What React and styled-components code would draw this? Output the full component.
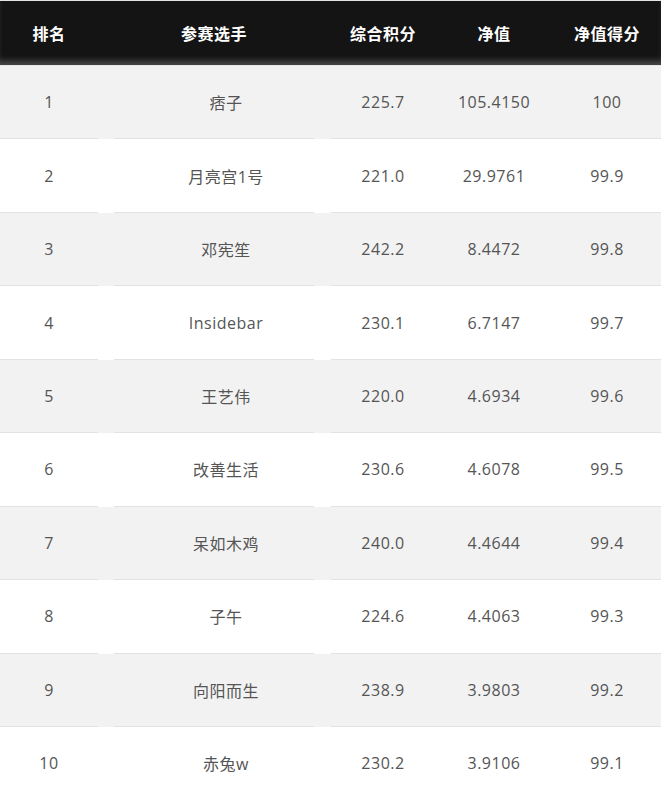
import React from "react";
import styled, { createGlobalStyle } from "styled-components";

const GlobalStyle = createGlobalStyle`
  html, body {
    margin: 0;
    padding: 0;
    background: #ffffff;
  }
  body {
    font-family: "Open Sans", "Noto Sans CJK SC", sans-serif;
  }
`;

const rows = [
  { rank: 1, name: "痞子", score: "225.7", nav: "105.4150", navScore: "100" },
  { rank: 2, name: "月亮宫1号", score: "221.0", nav: "29.9761", navScore: "99.9" },
  { rank: 3, name: "邓宪笙", score: "242.2", nav: "8.4472", navScore: "99.8" },
  { rank: 4, name: "Insidebar", score: "230.1", nav: "6.7147", navScore: "99.7" },
  { rank: 5, name: "王艺伟", score: "220.0", nav: "4.6934", navScore: "99.6" },
  { rank: 6, name: "改善生活", score: "230.6", nav: "4.6078", navScore: "99.5" },
  { rank: 7, name: "呆如木鸡", score: "240.0", nav: "4.4644", navScore: "99.4" },
  { rank: 8, name: "子午", score: "224.6", nav: "4.4063", navScore: "99.3" },
  { rank: 9, name: "向阳而生", score: "238.9", nav: "3.9803", navScore: "99.2" },
  { rank: 10, name: "赤兔w", score: "230.2", nav: "3.9106", navScore: "99.1" },
];

const Table = styled.div`
  width: 661px;
  border-top: 1px solid #e4e4e4;
`;

const HeaderRow = styled.div`
  display: flex;
  height: 64px;
  background: #141414;
  box-shadow: inset 0 -7px 6px -3px rgba(120, 120, 120, 0.55);
  border-bottom: 1px solid #e3e6ea;
`;

const Row = styled.div`
  display: flex;
  background: ${(p) => (p.$striped ? "#f2f2f2" : "#ffffff")};
`;

const Cell = styled.div`
  display: flex;
  align-items: center;
  justify-content: center;
  box-sizing: border-box;
  width: ${(p) => p.$w}px;
  flex: ${(p) => (p.$grow ? "1" : "none")};
  margin-left: ${(p) => p.$gap || 0}px;
  padding-left: ${(p) => p.$pad || 0}px;
`;

const HeadCell = styled(Cell)`
  color: #ffffff;
  font-family: "Noto Sans CJK SC", sans-serif;
  font-weight: 700;
  font-size: 16px;
  letter-spacing: 0.5px;
`;

const DataCell = styled(Cell)`
  height: 73.45px;
  border-bottom: 1px solid #e1e2e5;
  color: #555555;
  font-size: 16px;
  letter-spacing: 0.5px;
`;

const Stats = styled.div`
  display: flex;
  flex: 1;
  margin-left: 17px;
`;

const columns = [
  { key: "rank", w: 98 },
  { key: "name", w: 200, gap: 16 },
];

const statColumns = [
  { key: "score", w: 104 },
  { key: "nav", w: 118 },
  { key: "navScore", w: 108 },
];

export default function App() {
  return (
    <>
      <GlobalStyle />
      <Table>
        <HeaderRow>
          <HeadCell $w={98}>排名</HeadCell>
          <HeadCell $w={200} $gap={16}>参赛选手</HeadCell>
          <Stats>
            <HeadCell $w={104}>综合积分</HeadCell>
            <HeadCell $w={118}>净值</HeadCell>
            <HeadCell $w={108} $grow>净值得分</HeadCell>
          </Stats>
        </HeaderRow>
        {rows.map((r, i) => (
          <Row key={r.rank} $striped={i % 2 === 0}>
            {columns.map((c) => (
              <DataCell key={c.key} $w={c.w} $gap={c.gap} $pad={c.key === "name" ? 24 : 0}>
                {r[c.key]}
              </DataCell>
            ))}
            <Stats>
              {statColumns.map((c, j) => (
                <DataCell key={c.key} $w={c.w} $grow={j === 2}>
                  {r[c.key]}
                </DataCell>
              ))}
            </Stats>
          </Row>
        ))}
      </Table>
    </>
  );
}
